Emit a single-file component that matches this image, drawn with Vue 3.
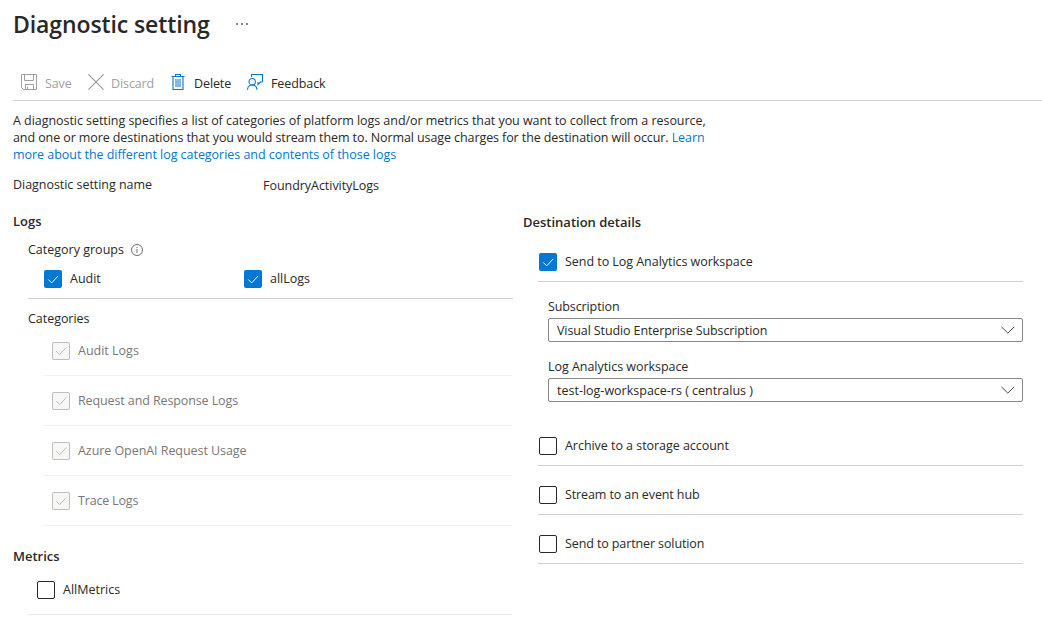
<script setup>
const groups = ['Audit', 'allLogs']
const categories = [
  { label: 'Audit Logs', cls: 't-audit' },
  { label: 'Request and Response Logs', cls: 't-request' },
  { label: 'Azure OpenAI Request Usage', cls: 't-azure' },
  { label: 'Trace Logs', cls: 't-trace' },
]
const selects = [
  { label: 'Subscription', value: 'Visual Studio Enterprise Subscription', cls: 'sub' },
  { label: 'Log Analytics workspace', value: 'test-log-workspace-rs ( centralus )', cls: 'law' },
]
const others = ['Archive to a storage account', 'Stream to an event hub', 'Send to partner solution']
</script>

<template>
  <div class="page">
    <header class="head">
      <h1>Diagnostic setting</h1>
      <span class="more"><i></i><i></i><i></i></span>
    </header>

    <nav class="toolbar">
      <span class="cmd off save">
        <svg width="16" height="16" viewBox="0 0 16 16" fill="none" stroke="#a19f9d">
          <path d="M.5 .5h15v15h-13l-2-2zM3.5 .5v6h9v-6M4.500 15.500v-5h8v5M6.500 12.500v3" />
        </svg>
        <b>Save</b>
      </span>
      <span class="cmd off discard">
        <svg width="16" height="16" viewBox="0 0 16 16" fill="none" stroke="#979593" stroke-width="1.1">
          <path d="M.4 .4l15.200 15.200M15.600 .4l-15.200 15.200" />
        </svg>
        <b>Discard</b>
      </span>
      <span class="cmd delete">
        <svg width="14" height="16" viewBox="0 0 14 16" fill="none" stroke="#0078d4">
          <path d="M4 5h6v8h-6z" fill="#83b9eb" stroke="none" />
          <path d="M.5 2.500h13M4.500 2.500v-2h5v2M2 2.500v13h10v-13" stroke-width="1.100" />
        </svg>
        <b>Delete</b>
      </span>
      <span class="cmd feedback">
        <svg width="16" height="16" viewBox="0 0 16 16" fill="none" stroke="#0078d4" stroke-width="1.100">
          <path d="M4.500 3v-2.500h11v7.500h-2l-2.500 2.500v-2.500M.5 15.700c.2-3 2-4.700 4.700-4.700s4.600 1.700 4.900 4.700" />
          <circle cx="5.200" cy="7.700" r="3.200" />
        </svg>
        <b>Feedback</b>
      </span>
    </nav>

    <p class="desc">
      <span class="d1">A diagnostic setting specifies a list of categories of platform logs and/or metrics that you want to collect from a resource,</span><br />
      <span class="d2">and one or more destinations that you would stream them to. Normal usage charges for the destination will occur. <a>Learn</a></span><br />
      <a class="d3">more about the different log categories and contents of those logs</a>
    </p>

    <div class="name-row">
      <span class="name-label">Diagnostic setting name</span>
      <span class="name-value">FoundryActivityLogs</span>
    </div>

    <div class="cols">
      <section class="left">
        <h2 class="h-logs">Logs</h2>
        <div class="group-title">
          <span>Category groups</span>
          <svg width="12" height="12" viewBox="0 0 12 12" fill="none" stroke="#605e5c">
            <circle cx="6" cy="6" r="5.500" stroke-width=".9" />
            <path d="M6 5v4M6 3v1" stroke-width=".9" />
          </svg>
        </div>
        <div class="groups">
          <label v-for="g in groups" :key="g" class="check">
            <span class="box on"><svg viewBox="0 0 18 18"><path d="M4.300 9.500l3.400 3.400 6.500-7" /></svg></span>
            <span>{{ g }}</span>
          </label>
        </div>
        <div class="cat-title">Categories</div>
        <div v-for="c in categories" :key="c.label" class="cat">
          <label class="check">
            <span class="box dis"><svg viewBox="0 0 18 18"><path d="M4.300 9.200l3.400 3.400 6.500-7" /></svg></span>
            <span :class="c.cls">{{ c.label }}</span>
          </label>
        </div>
        <h2 class="h-metrics">Metrics</h2>
        <div class="metric">
          <label class="check"><span class="box"></span><span>AllMetrics</span></label>
        </div>
      </section>

      <section class="right">
        <h2 class="h-dest">Destination details</h2>
        <div class="dest">
          <label class="check">
            <span class="box on"><svg viewBox="0 0 18 18"><path d="M4.300 9.500l3.400 3.400 6.500-7" /></svg></span>
            <span class="t-send">Send to Log Analytics workspace</span>
          </label>
        </div>
        <div class="fields">
          <div v-for="s in selects" :key="s.label" class="field">
            <div class="field-label" :class="'l-' + s.cls">{{ s.label }}</div>
            <div class="select">
              <span :class="'v-' + s.cls">{{ s.value }}</span>
              <svg width="14" height="8" viewBox="0 0 14 8" fill="none" stroke="#484644">
                <path d="M.5 .9l6.300 6.200 6.300-6.200" />
              </svg>
            </div>
          </div>
        </div>
        <div v-for="(o, i) in others" :key="o" class="dest">
          <label class="check"><span class="box"></span><span :class="'o-' + i">{{ o }}</span></label>
        </div>
      </section>
    </div>
  </div>
</template>

<style>
body {
  background: #fff;
  overflow: hidden;
}
</style>

<style scoped>
* {
  box-sizing: border-box;
}
.page {
  width: 1042px;
  height: 629px;
  padding-left: 13px;
  font-family: "Open Sans", "Noto Sans", sans-serif;
  font-size: 12.5px;
  line-height: 17px;
  color: #292827;
  background: #fff;
  white-space: nowrap;
  overflow: hidden;
}
h1, h2, p {
  margin: 0;
}
.head {
  display: flex;
  align-items: center;
  height: 48px;
}
h1 {
  width: 223px;
  font-size: 23px;
  line-height: 32px;
  font-weight: 600;
  letter-spacing: -0.1px;
}
.more {
  display: flex;
  gap: 3px;
}
.more i {
  width: 2px;
  height: 2px;
  background: #888;
}
.toolbar {
  display: flex;
  height: 53px;
  padding: 17px 0 0 8px;
  border-bottom: 1px solid #d2d0ce;
}
.cmd {
  display: flex;
  align-items: center;
  height: 35px;
}
.cmd svg {
  margin-top: -1px;
}
.cmd b {
  font-weight: 400;
  margin-left: 8px;
  padding-top: 1px;
  letter-spacing: -0.1px;
}
.off {
  color: #a19f9d;
}
.save {
  width: 67px;
}
.discard {
  width: 83px;
}
.discard b {
  margin-left: 7px;
}
.delete {
  width: 76px;
}
.delete b {
  margin-left: 9px;
}
.desc {
  padding-top: 11px;
  height: 62px;
}
.d1 {
  letter-spacing: -0.047px;
}
.d2 {
  letter-spacing: -0.093px;
}
.d3 {
  letter-spacing: -0.04px;
}
a {
  color: #0078d4;
}
.name-row {
  display: flex;
  height: 50px;
  padding-top: 13px;
  letter-spacing: -0.04px;
}
.name-label {
  width: 250px;
}
.name-value {
  padding-top: 1px;
}
.cols {
  display: flex;
  gap: 10px;
}
.left, .right {
  width: 500px;
}
h2 {
  font-size: 13px;
  line-height: 17px;
  font-weight: 600;
}
.check {
  display: flex;
  align-items: center;
  height: 18px;
}
.check > span:last-child {
  margin: -2px 0 0 8px;
}
.t-request {
  letter-spacing: -0.11px;
}
.t-azure {
  letter-spacing: -0.06px;
}
.t-trace {
  letter-spacing: -0.18px;
}
.t-send, .l-law, .o-0 {
  letter-spacing: -0.04px;
}
.l-sub, .v-sub {
  letter-spacing: -0.11px;
}
.o-1, .o-2 {
  letter-spacing: -0.11px;
}
.box {
  width: 18px;
  height: 18px;
  flex: none;
  border: 1px solid #292827;
  border-radius: 2px;
}
.box svg {
  display: block;
  width: 18px;
  height: 18px;
  fill: none;
  stroke: #fff;
  stroke-width: 1;
}
.on, .dis {
  border: 0;
}
.on {
  background: #0078d4;
}
.dis {
  background: #f7f7f6;
  box-shadow: inset 0 0 0 1px #c0bebc;
}
.dis svg {
  stroke: #bebbb8;
}
.h-logs {
  height: 28px;
}
.group-title {
  display: flex;
  align-items: flex-start;
  height: 18px;
  margin-left: 15px;
}
.group-title svg {
  margin: 3px 0 0 7px;
}
.groups {
  display: flex;
  height: 40px;
  margin-left: 15px;
  padding: 11px 0 0 16px;
  border-bottom: 1px solid #d2d0ce;
}
.groups .check {
  width: 200px;
}
.cat-title {
  height: 27px;
  margin-left: 15px;
  padding-top: 11px;
  letter-spacing: -0.04px;
}
.cat {
  height: 50px;
  margin: 0 1px 0 30px;
  padding: 16px 0 0 9px;
  border-bottom: 1px solid #f3f2f1;
  color: #797775;
}
.h-metrics {
  padding-top: 22px;
  height: 39px;
}
.metric {
  height: 50px;
  margin: 0 1px 0 15px;
  padding: 16px 0 0 9px;
  border-bottom: 1px solid #edebe9;
}
.h-dest {
  padding-top: 1px;
  height: 20px;
}
.dest {
  height: 49px;
  margin-left: 15px;
  padding: 20px 0 0 1px;
  border-bottom: 1px solid #d2d0ce;
}
.fields {
  height: 135px;
  padding: 16px 0 0 25px;
}
.field {
  height: 60px;
}
.field-label {
  height: 20px;
}
.select {
  display: flex;
  align-items: center;
  justify-content: space-between;
  height: 24px;
  padding: 0 7px 0 8px;
  border: 1px solid #8a8886;
  border-radius: 2px;
}
</style>
